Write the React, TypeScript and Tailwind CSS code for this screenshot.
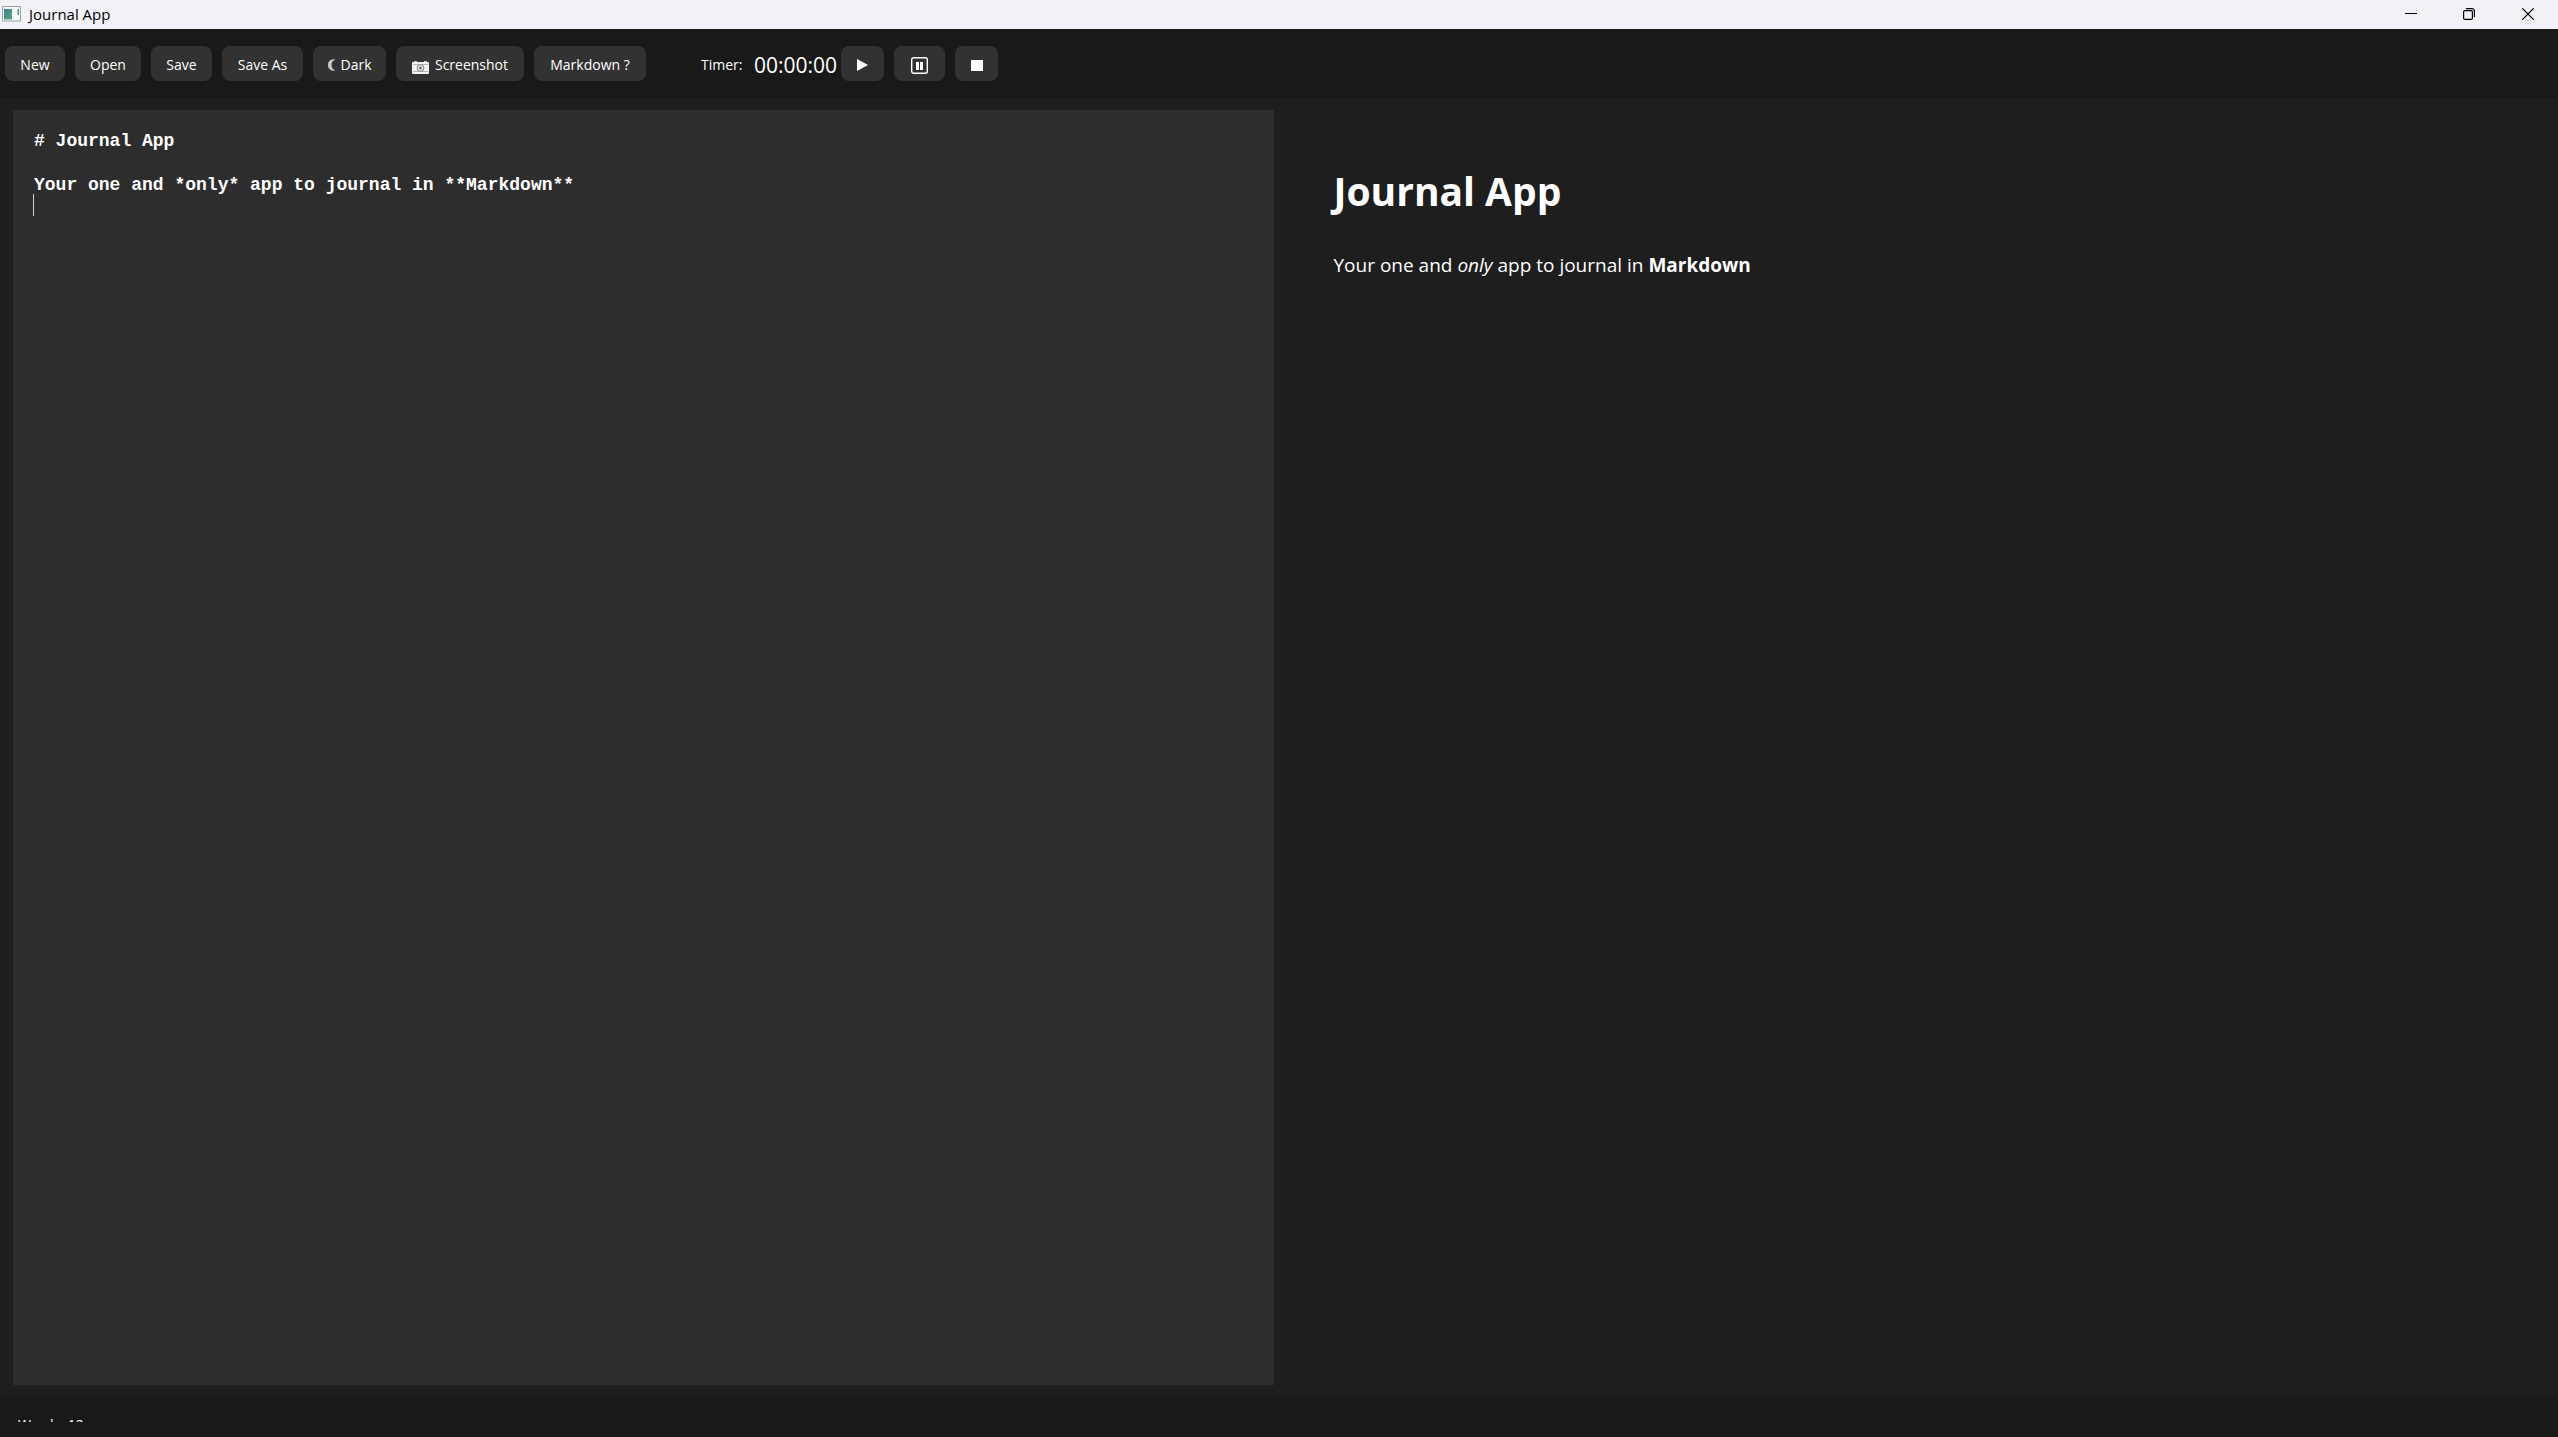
import React, { useState } from 'react';

interface ToolbarButtonProps {
  label?: string;
  className: string;
  children: React.ReactNode;
}

const ToolbarButton: React.FC<ToolbarButtonProps> = ({ label, className, children }) => (
  <button
    type="button"
    aria-label={label}
    className={`flex h-[35px] shrink-0 items-center justify-center rounded-lg bg-[#323232] pt-[3px] hover:bg-[#3d3d3d] ${className}`}
  >
    {children}
  </button>
);

const INITIAL_TEXT = `# Journal App

Your one and *only* app to journal in **Markdown**
`;

const TitleBar = () => (
  <header className="flex h-[29px] shrink-0 items-center justify-between bg-[#f3f1f8] pb-px text-black">
    <div className="flex items-center gap-2 pl-0.5">
      <svg width="19" height="16" viewBox="0 0 19 16" aria-hidden="true">
        <defs>
          <linearGradient id="app-icon" x1="0" y1="0" x2="1" y2="1">
            <stop offset="0" stopColor="#3f78a0" />
            <stop offset="1" stopColor="#56b06c" />
          </linearGradient>
        </defs>
        <rect x="0.5" y="0.5" width="18" height="14.5" fill="#f5f6f8" stroke="#98a0a8" />
        <rect x="2" y="3" width="8" height="10.5" fill="url(#app-icon)" />
        <rect x="15.5" y="3" width="1.5" height="6" fill="url(#app-icon)" />
      </svg>
      <h1 className="text-[15px] leading-5">Journal App</h1>
    </div>
    <div className="flex h-full">
      <button type="button" aria-label="Minimize" className="flex w-[58px] items-center justify-center">
        <svg width="12" height="12" viewBox="0 0 12 12" stroke="currentColor">
          <path d="M0 5.5h12" />
        </svg>
      </button>
      <button type="button" aria-label="Restore" className="flex w-[58px] items-center justify-center">
        <svg width="12" height="12" viewBox="0 0 12 12" fill="none" stroke="currentColor" strokeWidth="1.2">
          <rect x="0.6" y="2.6" width="8.8" height="8.8" rx="1.2" />
          <path d="M3 0.6h6a2.4 2.4 0 0 1 2.4 2.4v6" />
        </svg>
      </button>
      <button type="button" aria-label="Close" className="flex w-[60px] items-center justify-center">
        <svg width="12" height="12" viewBox="0 0 12 12" stroke="currentColor" strokeWidth="1.2">
          <path d="M0.3 0.3l11.4 11.4M11.7 0.3L0.3 11.7" />
        </svg>
      </button>
    </div>
  </header>
);

const Toolbar = () => (
  <nav className="flex h-[69px] shrink-0 items-center gap-2.5 bg-[#191919] pl-[5px] text-[14px] leading-5">
    <ToolbarButton className="w-[60px]">New</ToolbarButton>
    <ToolbarButton className="w-[66px]">Open</ToolbarButton>
    <ToolbarButton className="w-[61px]">Save</ToolbarButton>
    <ToolbarButton className="w-[81px]">Save As</ToolbarButton>
    <ToolbarButton className="w-[73px] gap-1">
      <svg width="9" height="12" viewBox="0 0 9 12" aria-hidden="true">
        <path d="M8.5 0.8A5.6 5.6 0 1 0 8.5 11.2A5.4 5.4 0 0 1 8.5 0.8Z" fill="#c8c8c8" />
      </svg>
      Dark
    </ToolbarButton>
    <ToolbarButton className="w-[128px] gap-1.5">
      <svg width="17" height="13" viewBox="0 0 17 13" className="mt-1" aria-hidden="true">
        <rect x="2" y="0" width="3" height="2" fill="#cfcfcf" />
        <rect x="12" y="0" width="3" height="2" fill="#cfcfcf" />
        <rect x="0" y="1" width="17" height="12" rx="1" fill="#f2f2f2" />
        <path d="M1 3.5h15M1 10.5h15" stroke="#b5b5b5" />
        <circle cx="8.5" cy="7" r="3.4" fill="#e0e0e0" stroke="#888" />
        <circle cx="8.5" cy="7" r="1.2" fill="#555" />
      </svg>
      Screenshot
    </ToolbarButton>
    <ToolbarButton className="w-[112px]">Markdown ?</ToolbarButton>

    {/* Timer */}
    <div className="ml-[45px] flex items-center gap-[5px]">
      <span className="w-12 pt-[3px]">Timer:</span>
      <time className="w-[82px] pt-[3px] text-[21px] leading-7">00:00:00</time>
      <div className="flex gap-2.5">
        <ToolbarButton label="Start timer" className="w-[43px]">
          <svg width="11" height="12" viewBox="0 0 11 12" fill="currentColor">
            <path d="M0 0l11 6L0 12z" />
          </svg>
        </ToolbarButton>
        <ToolbarButton label="Pause timer" className="w-[51px]">
          <svg width="17" height="17" viewBox="0 0 17 17" fill="currentColor">
            <rect x="0.7" y="0.7" width="15.6" height="15.6" rx="2" fill="none" stroke="currentColor" strokeWidth="1.4" />
            <rect x="5" y="5" width="3" height="8" />
            <rect x="9" y="5" width="3" height="8" />
          </svg>
        </ToolbarButton>
        <ToolbarButton label="Stop timer" className="w-[43px]">
          <svg width="12" height="11" viewBox="0 0 12 11" fill="currentColor">
            <rect width="12" height="11" />
          </svg>
        </ToolbarButton>
      </div>
    </div>
  </nav>
);

export default function App() {
  const [text, setText] = useState(INITIAL_TEXT);
  const wordCount = text.split(/\s+/).filter(Boolean).length;

  return (
    <div className="flex h-screen flex-col overflow-hidden bg-[#1e1e1e] font-['Open_Sans',sans-serif] text-white">
      <TitleBar />
      <Toolbar />

      <main className="grid min-h-0 flex-1 grid-cols-2 gap-3 py-3 pr-3 pl-[13px]">
        {/* Editor */}
        <section className="relative flex bg-[#2d2d2d]">
          <textarea
            aria-label="Journal entry"
            value={text}
            onChange={(e) => setText(e.target.value)}
            spellCheck={false}
            className="flex-1 resize-none bg-transparent px-[21px] py-5 font-['Liberation_Mono',monospace] text-[18px] leading-[22px] font-bold outline-none"
          />
          <span className="absolute top-[84px] left-5 h-[22px] w-px bg-[#d0d0d0]" />
        </section>

        {/* Preview */}
        <article className="px-12 pt-[53px]">
          <h2 className="text-[39px] leading-[56px] font-bold">Journal App</h2>
          <p className="mt-8 text-[19px] leading-7">
            Your one and <em>only</em> app to journal in <strong>Markdown</strong>
          </p>
        </article>
      </main>

      <footer className="h-10 shrink-0 bg-[#191919] px-[18px] pt-[18px]">
        <div className="h-[7px] overflow-hidden text-[14px] leading-5">Words: {wordCount}</div>
      </footer>
    </div>
  );
}
